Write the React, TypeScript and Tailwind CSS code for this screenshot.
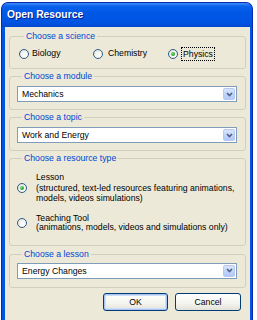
import React from 'react';

const FONT = { fontFamily: '"Liberation Sans", Arial, sans-serif' };

function Radio({ checked }: { checked?: boolean }) {
  return (
    <span className="flex h-[10px] w-[10px] shrink-0 items-center justify-center rounded-full border border-[#2F5B8C] bg-[radial-gradient(circle_at_65%_65%,#FFFFFF_0%,#F4F4F0_45%,#D8D8D0_100%)]">
      {checked && (
        <span className="h-[4px] w-[4px] rounded-full bg-[radial-gradient(circle_at_35%_35%,#7BE07A_0%,#2CA82A_60%,#1A8A1A_100%)]" />
      )}
    </span>
  );
}

function Select({ value }: { value: string }) {
  return (
    <div className="flex h-[16px] items-center border border-[#7F9DB9] bg-white pl-[4px] pr-[1px]">
      <span className="flex-1 leading-[14px] text-black">{value}</span>
      <span className="flex h-[12px] w-[12px] items-center justify-center rounded-[2px] border border-[#B6C9F4] bg-[linear-gradient(180deg,#D9E5FD_0%,#C2D4FA_50%,#B3C8F7_100%)]">
        <svg width="7" height="5" viewBox="0 0 7 5">
          <path d="M1 1 L3.5 3.5 L6 1" fill="none" stroke="#4D6185" strokeWidth="1.6" />
        </svg>
      </span>
    </div>
  );
}

function Group({ label, className, children }: { label: string; className?: string; children: React.ReactNode }) {
  return (
    <fieldset className={`rounded-[3px] border border-[#D0D0BF] ${className ?? ''}`}>
      <legend className="ml-[5px] px-[2px] leading-[11px] text-[#0046D5]">{label}</legend>
      {children}
    </fieldset>
  );
}

export default function App() {
  return (
    <div className="h-[320px] w-[257px] overflow-hidden bg-white pl-[1px] pt-[2px] text-[8.7px]" style={FONT}>
      <div className="flex h-[330px] w-[252px] flex-col overflow-hidden rounded-t-[7px] border-x border-t border-[#0A2AAE] bg-[#0055E5]">
        {/* Title bar */}
        <div className="flex h-[24px] shrink-0 items-center bg-[linear-gradient(180deg,#3D8DF9_0%,#0A61EB_14%,#0057E6_40%,#0054E3_80%,#0048D0_100%)] pl-[5px]">
          <span className="text-[10.3px] font-bold text-white [text-shadow:1px_1px_0_#0A1E8A]">Open Resource</span>
        </div>

        {/* Body */}
        <div className="ml-[3px] mr-[2px] flex flex-1 flex-col bg-[#ECE9D8] px-[4px] pt-[4px]">
          <Group label="Choose a science" className="pb-[8px] pl-[9px] pt-[5px]">
            <div className="flex h-[13px] items-center">
              <div className="flex w-[74px] items-center gap-[3px]">
                <Radio />
                <span>Biology</span>
              </div>
              <div className="flex w-[75px] items-center gap-[5px]">
                <Radio />
                <span>Chemistry</span>
              </div>
              <div className="flex items-center gap-[3px]">
                <Radio checked />
                <span className="border border-dotted border-black px-[1px] leading-[12px]">Physics</span>
              </div>
            </div>
          </Group>

          <Group label="Choose a module" className="mt-[2px] pb-[7px] pl-[7px] pr-[8px] pt-[4px]">
            <Select value="Mechanics" />
          </Group>

          <Group label="Choose a topic" className="mt-[2px] pb-[7px] pl-[7px] pr-[8px] pt-[4px]">
            <Select value="Work and Energy" />
          </Group>

          <Group label="Choose a resource type" className="mt-[2px] pb-[12px] pl-[7px] pr-[6px] pt-[8px]">
            <div className="flex items-center gap-[9px]">
              <Radio checked />
              <div className="leading-[10.5px]">
                <div>Lesson</div>
                <div>(structured, text-led resources featuring animations,</div>
                <div>models, videos simulations)</div>
              </div>
            </div>
            <div className="mt-[10px] flex items-center gap-[9px]">
              <Radio />
              <div className="leading-[9.5px]">
                <div>Teaching Tool</div>
                <div>(animations, models, videos and simulations only)</div>
              </div>
            </div>
          </Group>

          <Group label="Choose a lesson" className="mt-[3px] pb-[8px] pl-[7px] pr-[8px] pt-[3px]">
            <Select value="Energy Changes" />
          </Group>

          {/* Buttons */}
          <div className="mt-[5px] flex justify-end gap-[7px] pr-[5px]">
            <button className="h-[18px] w-[65px] rounded-[3px] border border-[#003C74] bg-[linear-gradient(180deg,#FFFFFF_0%,#F3F3EF_60%,#E3E1D8_100%)] leading-[14px] text-black shadow-[inset_0_0_0_1px_#A9C4F5,inset_0_0_0_2px_#CEDDF9]">
              OK
            </button>
            <button className="h-[18px] w-[66px] rounded-[3px] border border-[#003C74] bg-[linear-gradient(180deg,#FFFFFF_0%,#F3F3EF_60%,#E3E1D8_100%)] leading-[14px] text-black">
              Cancel
            </button>
          </div>
        </div>
      </div>
    </div>
  );
}
